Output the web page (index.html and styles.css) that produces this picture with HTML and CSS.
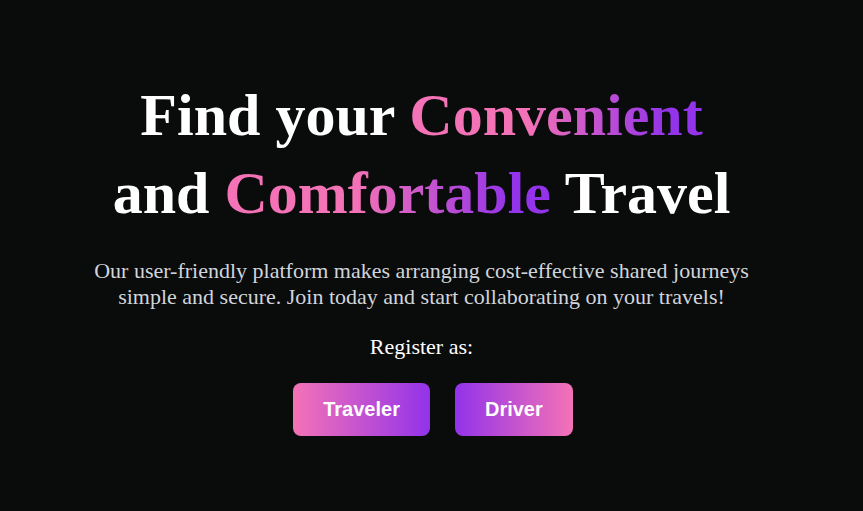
FILE: index.html
```html
<!DOCTYPE html>
<html lang="en">
<head>
<meta charset="utf-8">
<title>Find your Convenient and Comfortable Travel</title>
<link rel="stylesheet" href="styles.css">
</head>
<body>
<main class="hero">
  <div class="hero-text">
    <h1 class="title">Find your <span class="grad">Convenient</span> and <span class="grad">Comfortable</span> Travel</h1>
    <p class="lead">Our user-friendly platform makes arranging cost-effective shared journeys simple and secure. Join today and start collaborating on your travels!</p>
    <p class="register">Register as:</p>
  </div>
  <div class="actions">
    <a class="btn btn-traveler" href="#">Traveler</a>
    <a class="btn btn-driver" href="#">Driver</a>
  </div>
</main>
</body>
</html>
```

FILE: styles.css
```css
html, body {
  margin: 0;
  padding: 0;
  background: #0a0b0b;
  height: 100%;
}
body {
  font-family: "Liberation Serif", "Times New Roman", serif;
  color: #fff;
}
.hero {
  display: flex;
  flex-direction: column;
  align-items: center;
  padding-top: 76px;
}
.hero-text {
  display: flex;
  flex-direction: column;
  align-items: center;
  text-align: center;
  padding-right: 20px;
}
.title {
  margin: 0;
  font-size: 60px;
  line-height: 78px;
  font-weight: 700;
  max-width: 660px;
}
.grad {
  background: linear-gradient(90deg, #f472b6 0%, #f472b6 40%, #9333ea 88%, #9333ea 100%);
  -webkit-background-clip: text;
  background-clip: text;
  color: transparent;
}
.lead {
  margin: 26px 0 0;
  font-size: 22px;
  line-height: 26px;
  color: #d1d5db;
  max-width: 680px;
}
.register {
  margin: 24px 0 0;
  font-size: 22px;
  line-height: 26px;
  color: #fff;
}
.actions {
  display: flex;
  gap: 25px;
  margin-top: 23px;
  padding-left: 3px;
}
.btn {
  display: block;
  padding: 16px 30px;
  border-radius: 8px;
  font-family: "Liberation Sans", Arial, sans-serif;
  font-weight: 700;
  font-size: 20px;
  line-height: 21px;
  color: #fff;
  text-decoration: none;
}
.btn-traveler {
  background: linear-gradient(90deg, #f472b6, #9333ea);
}
.btn-driver {
  background: linear-gradient(90deg, #9333ea, #f472b6);
}
```
